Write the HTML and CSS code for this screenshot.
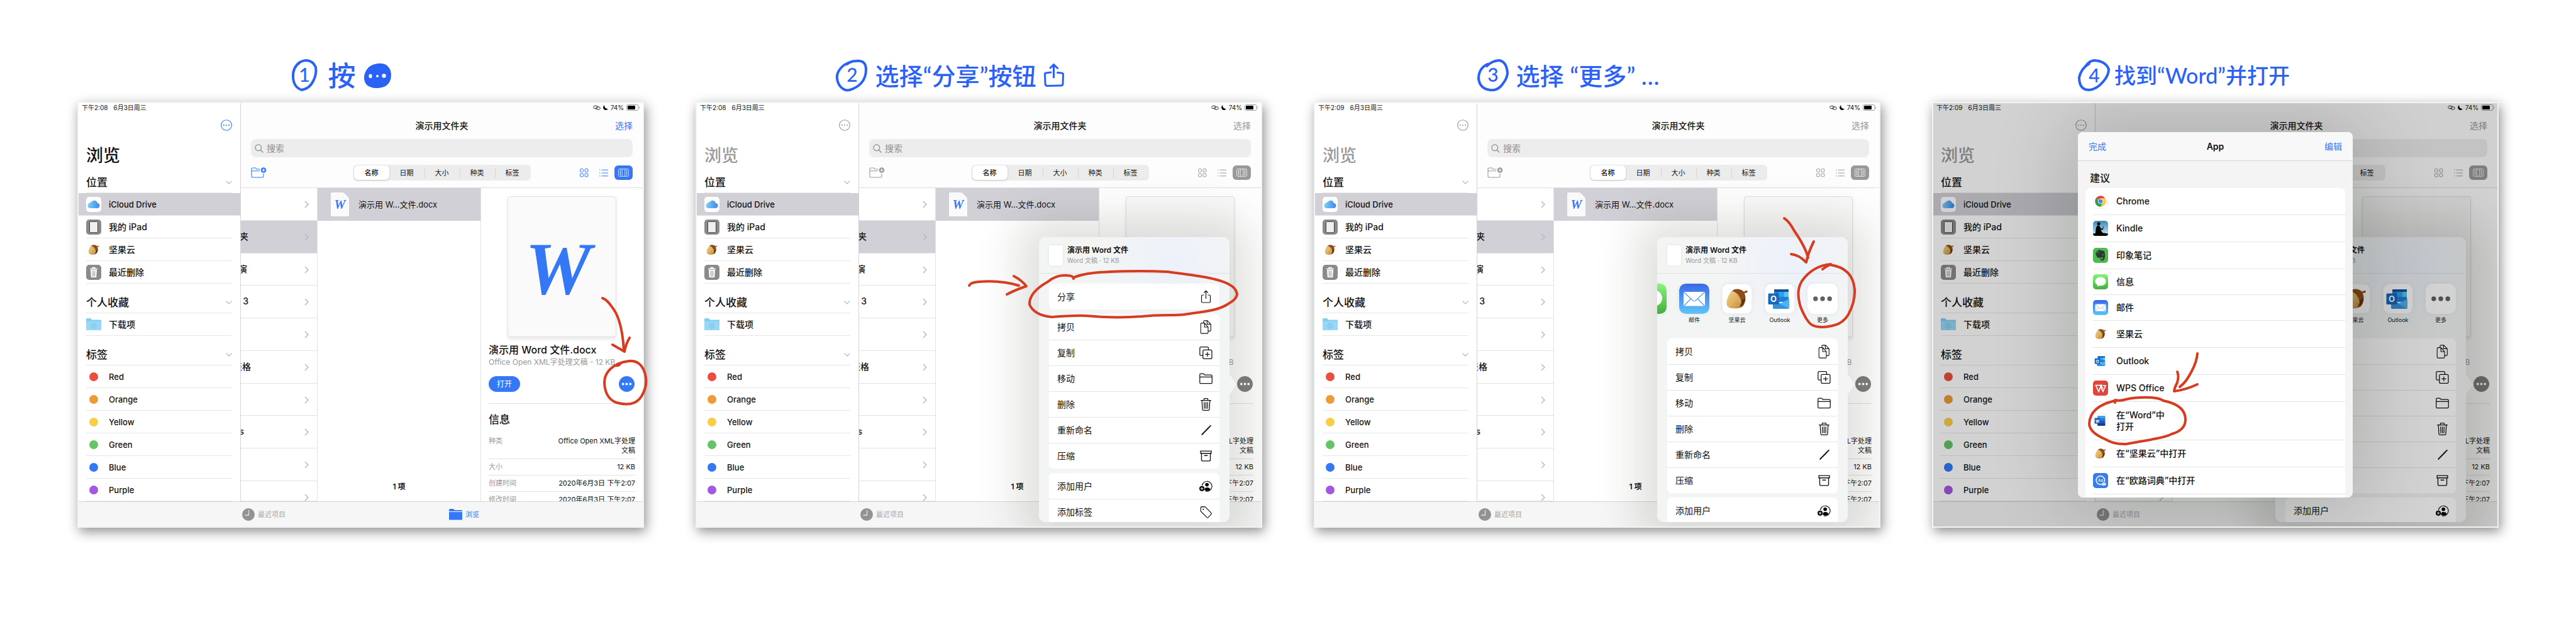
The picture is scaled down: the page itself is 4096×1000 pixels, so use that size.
FILE: index.html
```html
<!DOCTYPE html>
<html lang="zh-CN">
<head>
    <meta charset="UTF-8">
    <meta name="viewport" content="width=device-width, initial-scale=1.0">
    <title>在 iPad 上用 Word 打开文件</title>
    <link rel="stylesheet" href="styles.css">
</head>
<body>

<!-- Icons -->
<svg class="sprite" aria-hidden="true">
    <defs>
        <linearGradient id="gCloud" x1="0" x2="1"><stop offset="0" stop-color="#7fd0f5"/><stop offset="1" stop-color="#3f87ee"/></linearGradient>
        <linearGradient id="gMail" x2="0" y2="1"><stop offset="0" stop-color="#3a68e6"/><stop offset="1" stop-color="#5fc5f8"/></linearGradient>
        <linearGradient id="gMsg" x2="0" y2="1"><stop offset="0" stop-color="#8af17d"/><stop offset="1" stop-color="#43b03c"/></linearGradient>
        <linearGradient id="gKindle" x2="0" y2="1"><stop offset="0" stop-color="#3f87b5"/><stop offset="1" stop-color="#c9ecfa"/></linearGradient>
        <linearGradient id="gNut" x2="1" y2="1"><stop offset="0" stop-color="#f3d58c"/><stop offset="1" stop-color="#c78f3a"/></linearGradient>
    </defs>
    <symbol id="more" viewBox="0 0 18 18"><circle cx="9" cy="9" r="8.3" fill="none" stroke="currentColor" stroke-width="1.1"/><g fill="currentColor"><circle cx="4.9" cy="9" r="1"/><circle cx="9" cy="9" r="1"/><circle cx="13.1" cy="9" r="1"/></g></symbol>
    <symbol id="dots" viewBox="0 0 26 26"><g fill="#fff"><circle cx="7" cy="13" r="2"/><circle cx="13" cy="13" r="2"/><circle cx="19" cy="13" r="2"/></g></symbol>
    <symbol id="down" viewBox="0 0 10 6"><path d="M1 1l4 4 4-4" fill="none" stroke="#bfbfc2" stroke-width="1.4" stroke-linecap="round"/></symbol>
    <symbol id="right" viewBox="0 0 7 12"><path d="M1 1l5 5-5 5" fill="none" stroke="#b9b9bd" stroke-width="1.5"/></symbol>
    <symbol id="cloud" viewBox="0 0 24 24"><rect width="24" height="24" rx="5" fill="#fff"/><path d="M6.2 18a4 4 0 0 1-.6-7.9 3 3 0 0 1 3-2 5 5 0 0 1 9.200 1.600A4.200 4.200 0 0 1 18 18z" fill="url(#gCloud)"/></symbol>
    <symbol id="ipad" viewBox="0 0 24 24"><rect width="24" height="24" rx="5" fill="#8a8a8a"/><rect x="5.500" y="3.300" width="13" height="17.500" rx="1" fill="#efeff0" stroke="#3c3c3c"/></symbol>
    <symbol id="bin" viewBox="0 0 24 24"><rect width="24" height="24" rx="5" fill="#8a8a8a"/><path d="M6 6.500h12M10 6V4.500h4V6" stroke="#fff" stroke-width="1.300" fill="none"/><path d="M7 8h10l-.8 12H7.800z" fill="#fff"/><path d="M10 9.500l.3 9M12 9.500v9M14 9.500l-.3 9" stroke="#8a8a8a" stroke-width=".8"/></symbol>
    <symbol id="nut" viewBox="0 0 48 48"><rect x=".5" y=".5" width="47" height="47" rx="10" fill="#fff" stroke="#f0f0f0" stroke-width="1"/><path d="M17 11c4-4 14-3 18 2 2-2 4-3 6-1l-2 3c-2-1-3 0-3 1 3 6 1 16-3 20-5 4-18 4-22 1-5-6-1-20 6-26z" fill="#8c4d1d"/><path d="M16 12c-6 5-12 20-6 25 4 3 13 3 18 0 2-6 3-8 2-12-3-7-7-12-14-13z" fill="url(#gNut)"/><path d="M16 12c2 5 5 9 7 10l-13 14M23 22l10 11" stroke="#e6c178" stroke-width="1" fill="none"/><path d="M31 26c3-1 5-2 6-4 0 6-2 11-7 14 1-4 2-7 1-10z" fill="#5f3112"/></symbol>
    <symbol id="dl" viewBox="0 0 24 20"><path d="M0 1.500Q0 0 1 0h6l2 2.500h14q1 0 1 1V18q0 1-1 1H1q-1 0-1-1z" fill="#86cdf2"/><path d="M0 5h24v13q0 1-1 1H1q-1 0-1-1z" fill="#99d7f7"/><circle cx="12" cy="12" r="4" fill="none" stroke="#6fbde6" stroke-width=".9"/><path d="M12 9.500v4.500m-1.600-1.600l1.600 1.600 1.600-1.600" fill="none" stroke="#6fbde6" stroke-width=".9"/></symbol>
    <symbol id="search" viewBox="0 0 14 14"><circle cx="5.800" cy="5.800" r="4.900" fill="none" stroke="#8e8e93" stroke-width="1.200"/><path d="M9.400 9.400l4 4" stroke="#8e8e93" stroke-width="1.400"/></symbol>
    <symbol id="newfolder" viewBox="0 0 25 17"><path d="M14.500 3H9L7.500 1H2.500Q1 1 1 2.500v12Q1 16 2.500 16h16q1.500 0 1.500-1.500V10M1 5.700h13" fill="none" stroke="currentColor" stroke-width="1.100"/><circle cx="20" cy="4.500" r="4.300" fill="currentColor"/><path d="M20 2v5M17.500 4.500h5" stroke="#fff" stroke-width="1.100"/></symbol>
    <symbol id="gridv" viewBox="0 0 14 14"><g fill="none" stroke="currentColor"><rect x=".6" y=".6" width="4.800" height="4.800" rx=".8"/><rect x="8" y=".6" width="4.800" height="4.800" rx=".8"/><rect x=".6" y="8" width="4.800" height="4.800" rx=".8"/><rect x="8" y="8" width="4.800" height="4.800" rx=".8"/></g></symbol>
    <symbol id="listv" viewBox="0 0 14 12"><path d="M3.600 1.200H14M3.600 6H14M3.600 10.800H14M0 1.200h1.500M0 6h1.500M0 10.800h1.500" stroke="currentColor" stroke-width="1.100"/></symbol>
    <symbol id="colv" viewBox="0 0 17 13"><rect x=".7" y=".7" width="15.600" height="11.600" rx="1.500" fill="none" stroke="#fff" stroke-opacity=".8"/><path d="M3.500 2.300v8.400M6.200 1v11M10.800 1v11M13.500 2.300v8.400" stroke="#fff" stroke-opacity=".8"/></symbol>
    <symbol id="doc" viewBox="0 0 29 38"><path d="M0 1.500Q0 0 1.500 0H20l9 9v27.500q0 1.500-1.500 1.500h-26Q0 38 0 36.500z" fill="#fafafa"/><path d="M20 0v7.500Q20 9 21.500 9H29z" fill="#fff" stroke="#e4e4e4" stroke-width=".5"/></symbol>
    <symbol id="clock" viewBox="0 0 20 20"><circle cx="10" cy="10" r="10" fill="#929292"/><path d="M10.500 3v8H4.500" fill="none" stroke="#e4e4e4" stroke-width="1.300"/></symbol>
    <symbol id="folderfill" viewBox="0 0 21 18"><path d="M0 1.500Q0 0 1.500 0H7l1.500 2H20q1 0 1 1v1H0zM0 5h21v11.500q0 1-1 1H1q-1 0-1-1z" fill="currentColor"/></symbol>
    <symbol id="link" viewBox="0 0 12 9"><g fill="none" stroke="#333"><ellipse cx="4" cy="3.500" rx="3.400" ry="2.300"/><ellipse cx="8" cy="5" rx="3.400" ry="2.300"/></g></symbol>
    <symbol id="moon" viewBox="0 0 8 8"><path d="M2.500 0A4.200 4.200 0 1 0 8 5.800 4.500 4.500 0 0 1 2.500 0z"/></symbol>
    <symbol id="battery" viewBox="0 0 22 10"><rect x=".5" y=".5" width="18.500" height="9" rx="2.200" fill="none" stroke="#9b9b9b"/><rect x="2" y="2" width="12" height="6" rx="1"/><path d="M20.300 3.300v3.400q1-.5 1-1.700t-1-1.700z" fill="#9b9b9b"/></symbol>
    <symbol id="share" viewBox="0 0 20 22"><path d="M7 8H4.500Q3 8 3 9.500v9Q3 20 4.500 20h11q1.500 0 1.500-1.500v-9Q17 8 15.500 8H13M10 14V1.500M6.800 4.500L10 1.300l3.200 3.200" fill="none" stroke="currentColor" stroke-width="1.200"/></symbol>
    <symbol id="copy" viewBox="0 0 20 24"><g fill="#fff" stroke="currentColor" stroke-width="1.200"><path d="M6 4V2.500Q6 1 7.500 1h5l6 6v10.500q0 1.500-1.500 1.500h-3M12 1v6h6"/><path d="M1 6.500Q1 5 2.500 5h5l6.300 7v9.500q0 1.500-1.500 1.500h-9.800Q1 23 1 21.500zM7.500 5v7h6.300"/></g></symbol>
    <symbol id="dup" viewBox="0 0 20 20"><g fill="#fff" stroke="currentColor" stroke-width="1.200"><rect x=".8" y="1" width="13" height="13" rx="1.800"/><rect x="5.500" y="5.500" width="13.500" height="13.500" rx="1.800"/><path d="M12.200 8.800v7M8.700 12.300h7"/></g></symbol>
    <symbol id="move" viewBox="0 0 20 20"><path d="M.7 4Q.7 2.500 2.200 2.500h4L8 4.300h9.500q1.800 0 1.800 1.500v10q0 1.500-1.500 1.500H2.200q-1.500 0-1.500-1.500zM.7 7.500h18.600" fill="none" stroke="currentColor" stroke-width="1.200"/></symbol>
    <symbol id="trash" viewBox="0 0 20 20"><path d="M2 4h16M7 4V2q0-1 1-1h4q1 0 1 1v2M4 4l.8 13.500Q5 19 6.300 19h7.400q1.300 0 1.500-1.500L16 4M7.300 6.500l.4 10M10 6.500v10M12.700 6.500l-.4 10" fill="none" stroke="currentColor" stroke-width="1.200"/></symbol>
    <symbol id="pen" viewBox="0 0 20 20"><path d="M4 16.500L15 5.200M16 4.200l1-1" stroke="currentColor" stroke-width="1.900" stroke-linecap="round"/></symbol>
    <symbol id="zip" viewBox="0 0 20 20"><path d="M2 2.500h16V6H2zM3.300 6h13.400v9.500q0 2-1.500 2H4.800q-1.500 0-1.500-2zM7.300 9.300h5.400" fill="none" stroke="currentColor" stroke-width="1.300"/></symbol>
    <symbol id="adduser" viewBox="0 0 22 20"><path d="M4.500 9a8.300 8.300 0 1 1 6 9.200" fill="none" stroke="currentColor" stroke-width="1.200"/><circle cx="12.700" cy="7.500" r="3"/><path d="M9 17q-1-5 3.700-5t5.800 3.500q-3.500 3.500-9.500 1.500z"/><circle cx="4.300" cy="14" r="4.300"/><path d="M4.300 11.500v5M1.800 14h5" stroke="#fff" stroke-width="1.100"/></symbol>
    <symbol id="tag" viewBox="0 0 20 20"><path d="M2 3.500Q2 2 3.500 2L9 2.200 18 11.500q1 1 0 2l-4.500 4.700q-1 .8-2 0L2.300 9z" fill="none" stroke="currentColor" stroke-width="1.100"/><circle cx="6" cy="6" r="1"/></symbol>
    <symbol id="mail" viewBox="0 0 48 48"><rect width="48" height="48" rx="10" fill="url(#gMail)"/><rect x="7" y="13" width="34" height="22.500" rx="2" fill="#fff"/><path d="M8 14l13.500 12.500q2.500 2 5 0L40 14M8 35l10.500-11M40 35L29.500 24" fill="none" stroke="#4c9df0" stroke-width="1.200"/></symbol>
    <symbol id="msg" viewBox="0 0 48 48"><rect width="48" height="48" rx="10" fill="url(#gMsg)"/><path d="M24 9c10 0 17 6 17 14s-7 13.500-17 13.500q-3 0-5-.5-2 3-6 3.500 2-2.500 1.500-5.500Q7 30 7 23C7 15 14 9 24 9z" fill="#fff"/></symbol>
    <symbol id="outlook" viewBox="0 0 48 48"><rect x=".5" y=".5" width="47" height="47" rx="10" fill="#fff" stroke="#f0f0f0"/><path d="M15 9h23v20H15z" fill="#1d7fd6"/><path d="M15 9h23v4H15z" fill="#14519c"/><path d="M22 13h9v8h-9z" fill="#2aa3ea"/><path d="M31 13h7v8h-7z" fill="#55c8f7"/><path d="M13 26l13 5 13-7v14q0 2-2 2H15q-2 0-2-2z" fill="#4fb3f0"/><path d="M13 26l26 14H15q-2 0-2-2z" fill="#3590de"/><rect x="5.500" y="15.500" width="17" height="17.500" rx="1.500" fill="#1766c0"/><text x="14" y="29" text-anchor="middle" font-size="13" font-weight="700" fill="#fff">O</text></symbol>
    <symbol id="moreapp" viewBox="0 0 48 48"><rect width="48" height="48" rx="10" fill="#fff"/><g fill="#606066"><circle cx="12.800" cy="24" r="3.700"/><circle cx="24" cy="24" r="3.700"/><circle cx="35.200" cy="24" r="3.700"/></g></symbol>
    <symbol id="chrome" viewBox="0 0 24 24"><rect x=".5" y=".5" width="23" height="23" rx="5" fill="#fff" stroke="#f0f0f0"/><path d="M12 12L4.400 7.600A8.800 8.800 0 0 1 19.600 7.600H12z" fill="#d8473a"/><path d="M12 12l-7.600-4.400A8.800 8.800 0 0 0 12 20.800l3.800-6.600z" fill="#2f9e55"/><path d="M15.800 14.200L12 20.800A8.800 8.800 0 0 0 19.600 7.600H12z" fill="#f8cd48"/><circle cx="12" cy="12" r="4" fill="#fff"/><circle cx="12" cy="12" r="3.200" fill="#4a83ee"/></symbol>
    <symbol id="kindle" viewBox="0 0 24 24"><rect width="24" height="24" rx="5" fill="url(#gKindle)"/><circle cx="9" cy="4.700" r="2.500"/><path d="M4 20q0-9 2.500-12l3-.5q2 2 2.500 4l3 1.500 1-4 .8.300-1 5.200-4-.3 5 7h4.500v2L0 20z"/><path d="M0 20.500q12-2.500 24 0Q24 24 20 24H4q-4 0-4-3.500z"/></symbol>
    <symbol id="evernote" viewBox="0 0 24 24"><rect width="24" height="24" rx="5" fill="#4fb950"/><path d="M4 8l4-4q2-1.300 4 0 4 0 6 1.500 1.500 4 1 9-1 6-4.500 6-3 0-2.500-3 1-1.500 3-1l-.5 1.300q-1.200.2-.8 1 2 .7 2.500-3-1.500-.5-2.700-1-1 2-4 1.200Q5 15 4 8z" fill="#2d3a33"/><path d="M8.300 4.500V8H4.500" fill="none" stroke="#4fb950" stroke-width=".7"/><circle cx="15.800" cy="11" r=".9" fill="#4fb950"/></symbol>
    <symbol id="wps" viewBox="0 0 24 24"><rect width="24" height="24" rx="5" fill="#de453b"/><path d="M3.500 7.500h11.500M4.500 7.500L9 17.500l4-10 2.500 5.500M16 8h4l-4.200 9.500L11 7.500" fill="none" stroke="#fff" stroke-width="1.700"/></symbol>
    <symbol id="word" viewBox="0 0 24 24"><rect x=".5" y=".5" width="23" height="23" rx="5" fill="#fff" stroke="#f0f0f0"/><path d="M7 5q0-1 1-1h10.500q1 0 1 1v4H7z" fill="#41a0ea"/><path d="M7 8h12.500v4H7z" fill="#2b7cd3"/><path d="M7 12h12.500v4H7z" fill="#185abd"/><path d="M7 16h12.500v3q0 1-1 1H8q-1 0-1-1z" fill="#113f8c"/><rect x="2.500" y="7.500" width="9" height="9" rx=".8" fill="#1d56b5"/><text x="7" y="14.500" text-anchor="middle" font-size="6" font-weight="700" fill="#fff">W</text></symbol>
    <symbol id="eudic" viewBox="0 0 24 24"><rect width="24" height="24" rx="5" fill="#3b7de2"/><circle cx="11.800" cy="11.500" r="6.700" fill="none" stroke="#fff" stroke-width="1.600"/><text x="11.800" y="13.800" text-anchor="middle" font-size="6" fill="#fff">Aa</text><path d="M14 18q2 1 3.500-1l2.500-1.500 1 2.500-2 1.500-4 .5z" fill="#fff"/></symbol>
    <symbol id="blob" viewBox="0 0 44 40"><path d="M1 26C0 14 8 4 18 2q10-3 18 1 8 6 8 16 0 12-9 18-11 5-22 2Q3 37 1 26z" fill="#2a62f5"/><ellipse cx="11" cy="21" rx="2.600" ry="3.200" fill="#fff"/><circle cx="22" cy="21" r="2" fill="#fff"/><circle cx="32.500" cy="20.500" r="3.200" fill="#fff"/></symbol>
    <symbol id="inkshare" viewBox="0 0 32 38"><path d="M11 14L3 15Q1 15 1.500 18l.5 14q0 3 3 3.500l22-.5q3 0 3-3l.5-14q0-3-3-3l-6-.5M15.500 22V2M10 7l5.500-5.500 6 6" fill="none" stroke="currentColor" stroke-width="3" stroke-linecap="round"/></symbol>
</svg>

<!-- Files app window -->
<template id="filesTpl">
    <div class="window">
        <nav class="sidebar">
            <div class="clock"><span class="time"></span><span>6月3日周三</span></div>
            <button class="round" aria-label="更多"><svg><use href="#more"/></svg></button>
            <h3>浏览</h3>
            <h4>位置 <svg><use href="#down"/></svg></h4>
            <ul>
                <li class="on"><svg><use href="#cloud"/></svg><a href="#" class="en">iCloud Drive</a></li>
                <li><svg><use href="#ipad"/></svg><a href="#">我的 iPad</a></li>
                <li><svg><use href="#nut"/></svg><a href="#">坚果云</a></li>
                <li><svg><use href="#bin"/></svg><a href="#">最近删除</a></li>
            </ul>
            <h4>个人收藏 <svg><use href="#down"/></svg></h4>
            <ul>
                <li><svg><use href="#dl"/></svg><a href="#">下载项</a></li>
            </ul>
            <h4>标签 <svg><use href="#down"/></svg></h4>
            <ul class="tags">
                <li><i class="dot red"></i><a href="#">Red</a></li>
                <li><i class="dot orange"></i><a href="#">Orange</a></li>
                <li><i class="dot yellow"></i><a href="#">Yellow</a></li>
                <li><i class="dot green"></i><a href="#">Green</a></li>
                <li><i class="dot blue"></i><a href="#">Blue</a></li>
                <li><i class="dot purple"></i><a href="#">Purple</a></li>
            </ul>
        </nav>
        <div class="main">
            <header class="top">
                <div class="status"><svg class="s-link"><use href="#link"/></svg><svg class="s-moon"><use href="#moon"/></svg><span>74%</span><svg class="s-batt"><use href="#battery"/></svg></div>
                <div class="titlebar"><b>演示用文件夹</b><button class="select">选择</button></div>
                <label class="search"><svg><use href="#search"/></svg><input type="text" placeholder="搜索" aria-label="搜索"></label>
                <div class="tools">
                    <button class="newfolder" aria-label="新建文件夹"><svg><use href="#newfolder"/></svg></button>
                    <div class="segments">
                        <button class="cur">名称</button><button>日期</button><button>大小</button><button>种类</button><button>标签</button>
                    </div>
                    <div class="views">
                        <button aria-label="图标"><svg class="v-grid"><use href="#gridv"/></svg></button>
                        <button aria-label="列表"><svg class="v-list"><use href="#listv"/></svg></button>
                        <button aria-label="分栏" class="cur"><svg class="v-col"><use href="#colv"/></svg></button>
                    </div>
                </div>
            </header>
            <div class="columns">
                <ul class="parent">
                    <li><span></span><svg><use href="#right"/></svg></li>
                    <li class="on"><span class="m">文件夹</span><svg><use href="#right"/></svg></li>
                    <li><span class="s">演</span><svg><use href="#right"/></svg></li>
                    <li><span class="m">- 3</span><svg><use href="#right"/></svg></li>
                    <li><span></span><svg><use href="#right"/></svg></li>
                    <li><span class="l">表格</span><svg><use href="#right"/></svg></li>
                    <li><span></span><svg><use href="#right"/></svg></li>
                    <li><span class="xs">s</span><svg><use href="#right"/></svg></li>
                    <li><span></span><svg><use href="#right"/></svg></li>
                    <li><span></span><svg><use href="#right"/></svg></li>
                </ul>
                <div class="files">
                    <a href="#" class="file"><span class="docicon"><svg><use href="#doc"/></svg><b>W</b></span>演示用 W...文件.docx</a>
                    <p class="count">1 项</p>
                </div>
                <aside class="details">
                    <div class="preview">W</div>
                    <h5>演示用 Word 文件.docx</h5>
                    <p class="kind">Office Open XML字处理文稿 - 12 KB</p>
                    <div class="acts"><button class="open">打开</button><button class="ellipsis" aria-label="更多操作"><svg><use href="#dots"/></svg></button></div>
                    <h6>信息</h6>
                    <table>
                        <tr><th>种类</th><td>Office Open XML字处理文稿</td></tr>
                        <tr><th>大小</th><td>12 KB</td></tr>
                        <tr><th>创建时间</th><td>2020年6月3日 下午2:07</td></tr>
                        <tr><th>修改时间</th><td>2020年6月3日 下午2:07</td></tr>
                    </table>
                </aside>
            </div>
        </div>
        <footer class="tabbar">
            <a href="#"><svg class="t-clock"><use href="#clock"/></svg>最近项目</a>
            <a href="#" class="cur"><svg class="t-folder"><use href="#folderfill"/></svg>浏览</a>
        </footer>
    </div>
</template>

<!-- Popover that hangs on the "..." button -->
<template id="popTpl">
    <div class="popover">
        <div class="pop-body">
            <div class="pop-head"><i class="thumb"></i><p><b>演示用 Word 文件</b><small>Word 文稿 · 12 KB</small></p></div>
            <div class="slot"></div>
            <div class="group">
                <button>拷贝<svg><use href="#copy"/></svg></button>
                <button>复制<svg><use href="#dup"/></svg></button>
                <button>移动<svg><use href="#move"/></svg></button>
                <button>删除<svg><use href="#trash"/></svg></button>
                <button>重新命名<svg><use href="#pen"/></svg></button>
                <button>压缩<svg><use href="#zip"/></svg></button>
            </div>
            <div class="group">
                <button>添加用户<svg><use href="#adduser"/></svg></button>
                <button>添加标签<svg><use href="#tag"/></svg></button>
            </div>
        </div>
    </div>
</template>

<template id="shareTpl">
    <div class="group"><button>分享<svg><use href="#share"/></svg></button></div>
</template>

<template id="appsTpl">
    <div class="apps">
        <button><svg><use href="#msg"/></svg>信息</button>
        <button><svg><use href="#mail"/></svg>邮件</button>
        <button><svg><use href="#nut"/></svg>坚果云</button>
        <button><svg><use href="#outlook"/></svg>Outlook</button>
        <button><svg><use href="#moreapp"/></svg>更多</button>
    </div>
</template>

<main class="steps">
    <section class="step">
        <h2 class="big"><svg class="num" viewBox="0 0 50 50"><path d="M17 4Q5 12 6 28t14 20q12-2 18-14t4-22Q38 2 28 1q-9 0-15 6"/><text x="24" y="35">1</text></svg>按<svg class="ink-blob"><use href="#blob"/></svg></h2>
        <div class="screen" data-time="下午2:08">
            <svg class="ink" viewBox="0 0 901 676">
                <path d="M835 312Q842 314 850 326Q866 345 869 395M851 386L870 397Q872 385 878 375"/>
                <path d="M863 417Q861 420 855 419C840 428 838 440 838 447C839 464 846 474 857 478Q886 486 897 468Q906 453 904 439C901 416 888 411 877 412Q868 413 858 417"/>
            </svg>
        </div>
    </section>

    <section class="step">
        <h2><svg class="num" viewBox="0 0 50 50"><path d="M22 4C6 10 1 22 2 30c2 14 12 20 20 18 14-4 26-14 26-32C48 4 42 1 32 2q-8 0-14 5"/><text x="26" y="35">2</text></svg>选择“分享”按钮<svg class="ink-share"><use href="#inkshare"/></svg></h2>
        <div class="screen" data-time="下午2:08" data-pop="shareTpl">
            <svg class="ink" viewBox="0 0 901 676">
                <path d="M435 292Q437 287 450 286Q485 283 514 292M506 277Q518 283 526 293Q508 299 495 306"/>
                <path d="M601 281Q600 276 592 276Q574 274 560 286Q530 303 531 322Q538 339 566 342C580 341 600 339 621 340C650 343 680 343 710 341C740 338 760 340 777 338C800 334 830 333 847 321Q860 314 861 306Q860 296 848 290C830 279 780 274 750 270C710 268 650 269 624 273Q612 275 601 279"/>
            </svg>
        </div>
    </section>

    <section class="step">
        <h2><svg class="num" viewBox="0 0 50 50"><path d="M16 7Q2 14 2 30q2 16 18 18 12 2 20-9 8-10 8-19Q46 2 34 1q-11 1-19 9"/><text x="25" y="35">3</text></svg>选择 “更多” …</h2>
        <div class="screen" data-time="下午2:09" data-pop="appsTpl">
            <svg class="ink" viewBox="0 0 901 676">
                <path d="M748 185Q756 190 764 205Q782 231 786 248M759 242Q771 243 783 255Q786 240 795 222"/>
                <path d="M809 266Q814 262 822 258C800 260 785 272 776 285C768 298 770 312 774 326Q783 348 791 354Q804 361 824 356Q841 353 850 338Q861 318 860 298Q857 264 821 259"/>
            </svg>
        </div>
    </section>

    <section class="step">
        <h2 class="tight"><svg class="num" viewBox="0 0 50 50"><path d="M18 6Q5 14 2 28q0 20 16 20 12-1 22-13 9-10 9-20Q44 2 26 1q-8 1-13 8"/><text x="26" y="36">4</text></svg>找到“Word”并打开</h2>
        <div class="screen" data-time="下午2:09" data-pop="appsTpl">
            <div class="dim">
                <div class="modal">
                    <header><button>完成</button><b>App</b><button>编辑</button></header>
                    <h3>建议</h3>
                    <ul>
                        <li><svg><use href="#chrome"/></svg>Chrome</li>
                        <li><svg><use href="#kindle"/></svg>Kindle</li>
                        <li><svg><use href="#evernote"/></svg>印象笔记</li>
                        <li class="sys"><svg><use href="#msg"/></svg>信息</li>
                        <li class="sys"><svg><use href="#mail"/></svg>邮件</li>
                        <li><svg><use href="#nut"/></svg>坚果云</li>
                        <li><svg><use href="#outlook"/></svg>Outlook</li>
                        <li><svg><use href="#wps"/></svg>WPS Office</li>
                        <li class="two"><svg><use href="#word"/></svg><span>在“Word”中<br>打开</span></li>
                        <li><svg><use href="#nut"/></svg>在“坚果云”中打开</li>
                        <li><svg><use href="#eudic"/></svg>在“欧路词典”中打开</li>
                        <li></li>
                    </ul>
                </div>
            </div>
            <svg class="ink" viewBox="0 0 901 676">
                <path d="M422 400Q421 413 413 428Q404 446 394 453M390 429Q393 436 390 446Q385 456 385 460Q403 458 422 449"/>
                <path d="M291 478V474Q299 476 308 473Q325 469 349 470Q362 471 368 475Q403 482 403 505Q403 522 381 528C370 534 355 535 348 537Q320 542 308 544Q290 545 275 536Q251 526 250 512Q251 484 291 475"/>
            </svg>
        </div>
    </section>
</main>

<script src="app.js"></script>
</body>
</html>
```
FILE: styles.css
```css
* {
    box-sizing: border-box;
}

body {
    margin: 0;
    background: #fff;
    color: #111;
    font-family: Inter, "Noto Sans CJK SC", sans-serif;
    font-size: 14px;
    line-height: 20px;
}

h2, h3, h4, h5, h6, p, ul {
    margin: 0;
    padding: 0;
    font-weight: 500;
}

ul {
    list-style: none;
}

a {
    color: inherit;
    text-decoration: none;
}

button {
    padding: 0;
    border: none;
    background: none;
    font: inherit;
    color: inherit;
    cursor: pointer;
}

svg {
    display: block;
    flex: none;
}

.sprite {
    position: absolute;
    width: 0;
    height: 0;
}

/* Four steps side by side */
.steps {
    display: grid;
    grid-template-columns: repeat(4, minmax(0, 1fr));
    gap: 82px;
    padding: 78px 123px;
}

/* Handwritten captions */
.step h2 {
    display: flex;
    align-items: center;
    justify-content: center;
    gap: 12px;
    height: 84px;
    padding-right: 92px;
    color: #2a62f5;
    font-family: Lato, "Noto Sans CJK SC", sans-serif;
    font-size: 38px;
    line-height: 40px;
    white-space: nowrap;
}

.step h2.big {
    padding-right: 66px;
    font-size: 44px;
}

.step h2.tight {
    gap: 8px;
    padding-right: 100px;
    font-size: 34px;
}

.num {
    width: 50px;
    height: 50px;
    overflow: visible;
}

.num path {
    fill: none;
    stroke: currentColor;
    stroke-width: 4;
    stroke-linecap: round;
}

.num text {
    fill: currentColor;
    font-size: 30px;
    text-anchor: middle;
}

.ink-blob {
    width: 44px;
    height: 40px;
}

.ink-share {
    width: 32px;
    height: 38px;
}

/* iPad screen */
.screen {
    --tint: #3478f6;
    --title: #111;
    --ellipsis: #3478f6;
    position: relative;
    border: 2px solid #f1f6f5;
    box-shadow: 3px 6px 18px rgba(0, 0, 0, .45);
}

.screen[data-pop] {
    --tint: #999;
    --title: #999;
    --ellipsis: #7f7f7d;
}

.window {
    display: grid;
    grid-template-columns: 258px minmax(0, 1fr);
    position: relative;
    overflow: hidden;
    background: #fff;
}

/* Sidebar */
.sidebar {
    padding: 0 13px 0 12px;
    border-right: 1px solid #d4d4d6;
}

.clock {
    display: flex;
    gap: 9px;
    height: 14px;
    margin-left: -7px;
    font-size: 10px;
    line-height: 14px;
}

.round {
    display: block;
    margin: 12px 0 0 auto;
    color: var(--tint);
}

.round svg {
    width: 18px;
    height: 18px;
}

.sidebar h3 {
    height: 52px;
    padding-top: 20px;
    color: var(--title);
    font-size: 27px;
    line-height: 40px;
}

.sidebar h4 {
    display: flex;
    align-items: center;
    justify-content: space-between;
    height: 47px;
    padding-top: 14px;
    border-bottom: 1px solid #e6e6e6;
    font-size: 17px;
}

.sidebar h4 svg {
    width: 10px;
    height: 6px;
}

.sidebar li {
    display: flex;
    align-items: center;
    gap: 12px;
    height: 36px;
    border-bottom: 1px solid #e6e6e6;
}

.sidebar li svg {
    width: 24px;
    height: 24px;
}

.sidebar li.on {
    margin: 0 -13px 0 -12px;
    padding-left: 12px;
    background: #d1d0d6;
}

.en, .tags {
    font-size: 13px;
}

.dot {
    width: 14px;
    height: 14px;
    margin: 0 5px;
    border-radius: 50%;
}

.red { background: #eb4e3d; }
.orange { background: #f09a37; }
.yellow { background: #f8ce47; }
.green { background: #64c466; }
.blue { background: #3478f6; }
.purple { background: #a358df; }

/* Main area */
.main {
    display: flex;
    flex-direction: column;
}

.top {
    padding: 0 16px 11px;
    border-bottom: 1px solid #dcdcdc;
    background: #fdfdfd;
}

.status {
    display: flex;
    align-items: center;
    justify-content: flex-end;
    gap: 4px;
    height: 14px;
    margin-right: -12px;
    font-size: 10px;
}

.s-link { width: 12px; height: 9px; }
.s-moon { width: 8px; height: 8px; }
.s-batt { width: 22px; height: 10px; }

.titlebar {
    display: grid;
    grid-template-columns: 1fr auto 1fr;
    align-items: center;
    height: 43px;
}

.titlebar b {
    grid-column: 2;
    font-weight: 500;
}

.select {
    justify-self: end;
    color: var(--tint);
}

.search {
    display: flex;
    align-items: center;
    gap: 5px;
    height: 29px;
    padding: 0 6px;
    border-radius: 8px;
    background: #ededed;
}

.search svg {
    width: 14px;
    height: 14px;
}

.search input {
    flex: 1;
    min-width: 0;
    padding: 0;
    border: none;
    background: none;
    font: inherit;
}

.search input::placeholder {
    color: #8e8e93;
}

.tools {
    display: grid;
    grid-template-columns: 1fr 282px 1fr;
    align-items: center;
    margin-top: 12px;
}

.newfolder {
    justify-self: start;
    color: var(--tint);
}

.newfolder svg {
    width: 25px;
    height: 17px;
}

.segments {
    display: grid;
    grid-template-columns: repeat(5, 1fr);
    height: 25px;
    padding: 1px;
    border-radius: 6px;
    background: #ececec;
    font-size: 11px;
}

.segments .cur {
    border-radius: 6px;
    background: #fff;
    box-shadow: 0 1px 3px rgba(0, 0, 0, .2);
    font-weight: 500;
}

.segments button + button + button {
    background: linear-gradient(#d4d4d4, #d4d4d4) left center / 1px 14px no-repeat;
}

.views {
    display: flex;
    align-items: center;
    justify-content: flex-end;
    gap: 17px;
    color: var(--tint);
}

.views .cur {
    padding: 5px 6px;
    margin-left: -7px;
    border-radius: 6px;
    background: var(--tint);
}

.v-grid { width: 14px; height: 14px; }
.v-list { width: 14px; height: 12px; }
.v-col { width: 17px; height: 13px; }

/* Three file columns, as tall as the sidebar lets them be */
.columns {
    flex: 1;
    display: grid;
    grid-template-columns: 122px minmax(0, 1fr) 258px;
    grid-template-rows: minmax(0, 1fr);
    contain: size;
}

.parent {
    display: grid;
    grid-template-rows: repeat(9, 1fr) 32px;
    border-right: 1px solid #e2e2e2;
    overflow: hidden;
}

.parent li {
    display: flex;
    justify-content: space-between;
    min-height: 0;
    padding: 15px 13px 0 0;
    border-bottom: 1px solid #e2e2e2;
}

.parent li.on {
    background: #d1d0d6;
}

.parent span {
    display: flex;
    justify-content: flex-end;
    overflow: hidden;
    white-space: nowrap;
}

.parent .xs { width: 5px; }
.parent .s { width: 10px; }
.parent .m { width: 12px; }
.parent .l { width: 16px; }

.parent svg {
    width: 7px;
    height: 12px;
    margin-top: 5px;
}

.files {
    display: flex;
    flex-direction: column;
    justify-content: space-between;
}

.file {
    display: flex;
    align-items: center;
    gap: 15px;
    height: 52px;
    padding-left: 21px;
    background: #d1d0d6;
    font-size: 13px;
}

.docicon {
    display: grid;
    place-items: center;
    width: 29px;
}

.docicon > * {
    grid-area: 1 / 1;
}

.docicon svg {
    width: 29px;
    height: 38px;
}

.docicon b, .preview {
    color: #3478f6;
    font-family: "Liberation Serif", serif;
    font-style: italic;
    font-weight: 700;
}

.docicon b {
    font-size: 20px;
}

.count {
    padding-bottom: 13px;
    text-align: center;
    font-size: 12px;
    font-weight: 600;
}

.details {
    overflow: hidden;
    padding: 13px 12px 0;
    border-left: 1px solid #e2e2e2;
}

.preview {
    width: 173px;
    height: 224px;
    margin: 0 auto;
    padding-right: 12px;
    border: 1px solid #e0e0e0;
    border-radius: 4px;
    background: #fafafa;
    box-shadow: 0 4px 4px rgba(0, 0, 0, .08);
    font-size: 118px;
    line-height: 230px;
    text-align: center;
}

.details h5 {
    margin-top: 8px;
    font-size: 16px;
    line-height: 24px;
    white-space: nowrap;
}

.kind {
    color: #999;
    font-size: 12px;
    font-weight: 400;
    line-height: 16px;
    white-space: nowrap;
}

.acts {
    display: flex;
    justify-content: space-between;
    padding: 14px 1px 18px 0;
    border-bottom: 1px solid #e2e2e2;
}

.open {
    width: 50px;
    height: 25px;
    border-radius: 13px;
    background: #3478f6;
    color: #fff;
    font-size: 12px;
}

.ellipsis {
    border-radius: 50%;
    background: var(--ellipsis);
}

.ellipsis svg {
    width: 25px;
    height: 25px;
}

.details h6 {
    margin-top: 13px;
    font-size: 17px;
    line-height: 24px;
}

.details table {
    width: 100%;
    margin-top: 10px;
    border-collapse: collapse;
    font-size: 11px;
    line-height: 15px;
}

.details tr {
    border-bottom: 1px solid #e2e2e2;
}

.details th, .details td {
    padding: 5px 0;
    vertical-align: top;
}

.details th {
    width: 46%;
    color: #999;
    font-weight: 400;
    text-align: left;
}

.details td {
    text-align: right;
}

/* Bottom tabs */
.tabbar {
    grid-column: 1 / -1;
    display: flex;
    align-items: center;
    justify-content: space-evenly;
    height: 40px;
    border-top: 1px solid #d6d6d6;
    background: #f6f6f6;
    color: #a8a8a8;
    font-size: 11px;
}

.tabbar a {
    display: flex;
    align-items: center;
    gap: 5px;
}

.tabbar .cur {
    color: var(--tint);
}

.t-clock { width: 20px; height: 20px; }
.t-folder { width: 21px; height: 18px; }

/* Popover */
.popover {
    position: absolute;
    top: 213px;
    right: 50px;
    bottom: 7px;
    width: 303px;
    border-radius: 10px;
    background: #f3f4f4;
    box-shadow: 0 0 70px 30px rgba(40, 40, 30, .15);
}

.popover::after {
    content: "";
    position: absolute;
    top: 218px;
    left: 100%;
    border: solid transparent;
    border-width: 16px 0 16px 11px;
    border-left-color: #f3f4f4;
}

.pop-body {
    height: 100%;
    border-radius: 10px;
    overflow: hidden;
    background: radial-gradient(circle at 70% 10%, #ecf1fa, #f3f4f4 110px);
}

.pop-head {
    display: flex;
    gap: 7px;
    height: 58px;
    padding: 13px 16px 0;
    border-bottom: 1px solid #dfe1e3;
}

.thumb {
    width: 22px;
    height: 32px;
    border-radius: 2px;
    background: #fff;
    box-shadow: 0 0 4px rgba(0, 0, 0, .08);
}

.pop-head b, .pop-head small {
    display: block;
    font-size: 12px;
    line-height: 16px;
    font-weight: 600;
}

.pop-head small {
    color: #999;
    font-size: 10px;
    font-weight: 400;
}

.slot {
    padding-top: 16px;
}

.group {
    margin: 0 16px 7px;
    border-radius: 7px;
    background: #fff;
}

.group button {
    display: flex;
    align-items: center;
    justify-content: space-between;
    width: 100%;
    height: 41px;
    padding: 0 11px 0 13px;
}

.group button + button {
    border-top: 1px solid #e4e4e4;
}

.group svg {
    width: 21px;
    height: 22px;
}

.apps {
    display: flex;
    justify-content: flex-end;
    gap: 20px;
    height: 87px;
    padding: 0 16px;
}

.apps button {
    flex: none;
    width: 48px;
    height: 68px;
    font-size: 9px;
    line-height: 20px;
}

.apps svg {
    width: 48px;
    height: 48px;
    border-radius: 10px;
    box-shadow: 0 0 6px rgba(0, 0, 0, .06);
}

/* App chooser on top of a dimmed screen */
.dim {
    display: flex;
    position: absolute;
    inset: 0;
    z-index: 1;
    overflow: hidden;
    background: rgba(0, 5, 0, .18);
}

.modal {
    width: 437px;
    height: 581px;
    margin: auto;
    overflow: hidden;
    border-radius: 8px;
    background: #f4f4f5;
    box-shadow: 0 0 120px 20px rgba(0, 10, 0, .16);
}

.modal header {
    display: grid;
    grid-template-columns: 1fr auto 1fr;
    align-items: center;
    height: 46px;
    padding: 0 17px;
    border-bottom: 1px solid #d6d6d8;
    background: #f8f8f9;
}

.modal header b {
    font-weight: 600;
}

.modal header button {
    justify-self: start;
    color: #3478f6;
}

.modal header button:last-child {
    justify-self: end;
}

.modal h3 {
    padding: 17px 19px 6px;
    font-size: 16px;
}

.modal ul {
    margin: 0 12px;
    padding-left: 12px;
    border-radius: 8px 8px 0 0;
    background: #fff;
}

.modal li {
    display: flex;
    align-items: center;
    gap: 13px;
    height: 43px;
    border-bottom: 1px solid #e4e4e4;
}

.modal li.sys {
    height: 41px;
}

.modal li.two {
    height: 61px;
    line-height: 18px;
}

.modal li svg {
    width: 24px;
    height: 24px;
}

/* Red pen marks */
.ink {
    position: absolute;
    inset: -2px;
    z-index: 2;
    overflow: visible;
    fill: none;
    stroke: #d63c20;
    stroke-width: 4;
    stroke-linecap: round;
    stroke-linejoin: round;
    pointer-events: none;
}
```
FILE: app.js
```js
function tpl(id) {
    return document.getElementById(id).content.cloneNode(true);
}

document.querySelectorAll(".screen").forEach(screen => {
    const files = tpl("filesTpl");
    files.querySelector(".time").textContent = screen.dataset.time;

    if (screen.dataset.pop) {
        const pop = tpl("popTpl");
        pop.querySelector(".slot").append(tpl(screen.dataset.pop));
        files.querySelector(".window").append(pop);
    }

    screen.prepend(files);
});
```
